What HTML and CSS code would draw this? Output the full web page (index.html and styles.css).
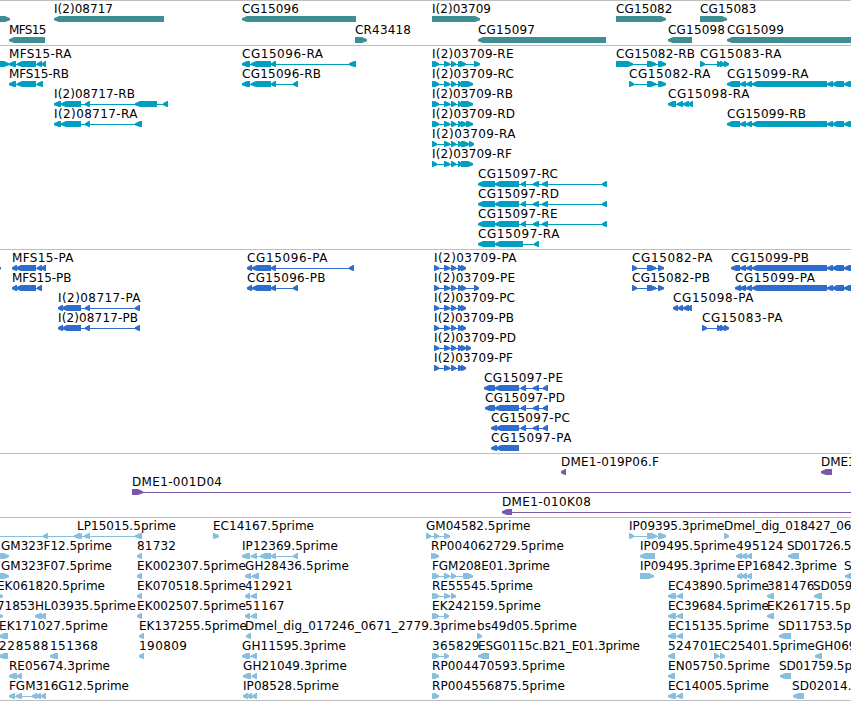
FILE: index.html
```html
<!DOCTYPE html>
<html lang="en">
<head>
  <meta charset="UTF-8" />
  <meta name="viewport" content="width=device-width, initial-scale=1.0"/>
  <title>Genome Browser</title>
  <link rel="stylesheet" href="styles.css">
</head>
<body>
  <main class="browser">
    <section class="track genes"><svg id="genes"></svg></section>
    <section class="track transcripts"><svg id="transcripts"></svg></section>
    <section class="track proteins"><svg id="proteins"></svg></section>
    <section class="track clones"><svg id="clones"></svg></section>
    <section class="track ests"><svg id="ests"></svg></section>
  </main>

  <script src="tracks.js"></script>
</body>
</html>
```
FILE: styles.css
```css
:root {
  --line-color: #bebebe;
  --gene-color: #3f8e93;
  --transcript-color: #009fc0;
  --protein-color: #2f6dcd;
  --clone-color: #7858a9;
  --est-color: #88bfdf;
}

body {
  margin: 0;
  background: #fff;
  overflow: hidden;
}

.browser {
  display: flex;
  flex-direction: column;
  border-bottom: 1px solid var(--line-color);
}

.track {
  box-sizing: border-box;
  border-top: 1px solid var(--line-color);
}

.track svg {
  display: block;
  width: 100%;
  height: 100%;
  overflow: hidden;
}

.track rect {
  shape-rendering: crispEdges;
}

.track text {
  font-family: "DejaVu Sans", sans-serif;
  font-size: 12px;
  fill: #000;
}

.genes { height: 45px; fill: var(--gene-color); }
.transcripts { height: 204px; fill: var(--transcript-color); }
.proteins { height: 204px; fill: var(--protein-color); }
.clones { height: 64px; fill: var(--clone-color); }
.ests { height: 183px; fill: var(--est-color); }
```
FILE: tracks.js
```js
// feature: [row, label, label end, strand, "start,end start,end ...", label start]
const cg99 = "740,746 746,752 752,827 827,833 832,844 844,856";
const pair = "432,437 434,439";

const genes = [
  [0, "", 0, "+", "-20,10"],
  [0, "I(2)08717", 112.5, "-", "54,164"],
  [1, "MFS15", 46, "-", "9,45"],
  [0, "CG15096", 298.5, "-", "242,356"],
  [1, "CR43418", 410.5, "+", "355,367"],
  [0, "I(2)03709", 490.5, "+", "432,480"],
  [1, "CG15097", 534.5, "-", "478,606"],
  [0, "CG15082", 672, "+", "616,666"],
  [1, "CG15098", 724.5, "-", "668,692"],
  [0, "CG15083", 756, "+", "700,727"],
  [1, "CG15099", 783.5, "-", "727,870"]
];

const transcripts = [
  [0, "", 0, "+", "-20,9"],
  [0, "MFS15-RA", 71, "-", "9,16 17,36 37,42 42,46"],
  [1, "MFS15-RB", 68.5, "-", "9,16 17,36 37,43"],
  [2, "I(2)08717-RB", 134.5, "-", "54,61 61,81 85,90 135,157 163,168"],
  [3, "I(2)08717-RA", 137, "-", "54,61 61,81 85,90 135,142"],
  [0, "CG15096-RA", 322.5, "-", "242,250 251,271 271,276 349,356"],
  [1, "CG15096-RB", 320.5, "-", "242,250 251,271 271,276 293,298"],
  [0, "I(2)03709-RE", 513, "+", pair + " 444,450 451,456 458,463 460,466 474,480"],
  [1, "I(2)03709-RC", 513.5, "+", pair + " 444,450 451,456 458,462 461,473"],
  [2, "I(2)03709-RB", 512.5, "+", pair + " 444,450 451,456 458,462 461,473"],
  [3, "I(2)03709-RD", 514.5, "+", pair + " 444,450 451,456 458,463 461,467 466,473"],
  [4, "I(2)03709-RA", 515, "+", "432,437 444,450 451,456 458,462 461,469 469,474"],
  [5, "I(2)03709-RF", 511.5, "+", "432,437 444,450 451,456 458,462 461,473"],
  [6, "CG15097-RC", 557.5, "-", "478,495 495,519 521,526 533,539 542,548 602,607"],
  [7, "CG15097-RD", 558.5, "-", "478,495 495,519 521,526 533,539 542,548 602,607"],
  [8, "CG15097-RE", 557, "-", "478,495 495,519 521,526 533,539 542,548 602,607"],
  [9, "CG15097-RA", 559, "-", "478,495 495,523 534,539"],
  [0, "CG15082-RB", 694.5, "+", "616,633 647,656 658,666"],
  [0, "CG15083-RA", 781, "+", "700,705 717,722 720,725 724,729"],
  [1, "CG15082-RA", 710, "+", "629,634 647,656 658,666"],
  [1, "CG15099-RA", 808, "-", "727,740 " + cg99],
  [2, "CG15098-RA", 749, "-", "668,676 677,683 683,689 688,693"],
  [3, "CG15099-RB", 805.5, "-", "727,740 " + cg99]
];

const proteins = [
  [0, "", 0, "+", "-20,-12 -8,1"],
  [0, "MFS15-PA", 73, "-", "12,17 16,36 37,42 41,46"],
  [1, "MFS15-PB", 71, "-", "12,17 16,36 37,42"],
  [2, "I(2)08717-PA", 140, "-", "58,63 62,81 85,90 135,140"],
  [3, "I(2)08717-PB", 137.5, "-", "58,63 62,81 85,90 135,140"],
  [0, "CG15096-PA", 327, "-", "247,252 252,271 271,276 349,354"],
  [1, "CG15096-PB", 325, "-", "247,252 252,271 271,276 293,298"],
  [0, "I(2)03709-PA", 516, "+", "434,439 444,450 451,456 458,463 461,466"],
  [1, "I(2)03709-PE", 514.5, "+", "434,439 444,450 451,456 458,463 461,466 474,479"],
  [2, "I(2)03709-PC", 514.5, "+", "434,439 444,450 451,456 458,463 461,466"],
  [3, "I(2)03709-PB", 513.5, "+", "434,439 444,450 451,456 458,463 461,466"],
  [4, "I(2)03709-PD", 515.5, "+", "434,439 444,450 451,456 458,463 461,466 466,471"],
  [5, "I(2)03709-PF", 512.5, "+", "434,439 444,450 451,456 458,463 461,466"],
  [6, "CG15097-PE", 562.5, "-", "484,495 495,519 521,526 533,539 543,548"],
  [7, "CG15097-PD", 564.5, "-", "485,495 495,519 521,526 533,539 543,548"],
  [8, "CG15097-PC", 569.5, "-", "491,497 496,519 521,526 533,539 543,548"],
  [9, "CG15097-PA", 571, "-", "491,497 496,519"],
  [0, "CG15082-PA", 712, "+", "632,637 647,656 658,664"],
  [1, "CG15082-PB", 709.5, "+", "632,637 647,656 658,664"],
  [0, "CG15099-PB", 808.5, "-", "731,740 " + cg99],
  [1, "CG15099-PA", 814.5, "-", "735,741 " + cg99],
  [2, "CG15098-PA", 753, "-", "673,678 678,683 683,689 687,692"],
  [3, "CG15083-PA", 782, "+", "702,707 717,722 720,725 724,729"]
];

const clones = [
  [0, "DME1-019P06.F", 658.5, "-", "561,566"],
  [0, "DME1", 855, "-", "821,832"],
  [1, "DME1-001D04", 221.5, "+", "132,143 870,880"],
  [2, "DME1-010K08", 590.5, "-", "502,512 870,880"]
];

const ests = [
  [0, "", 0, "-", "-10,-5 43,48 74,80"],
  [0, "LP15015.5prime", 175.5, "-", "77,82 84,90 135,142"],
  [0, "EC14167.5prime", 313.5, "+", "213,219"],
  [0, "GM04582.5prime", 530, "+", "426,431 434,439 444,450"],
  [0, "IP09395.3prime", 724, "+", "629,634 647,657 658,666"],
  [0, "Dmel_dig_018427_06", 851, "+", "724,729"],
  [1, "GM323F12.5prime", 111.5, "+", "-8,9", 1],
  [1, "81732", 175.5, "-", "137,142"],
  [1, "IP12369.5prime", 337.5, "-", "242,250 251,257 260,271 271,276 293,298"],
  [1, "RP004062729.5prime", 563.5, "+", "431,436 433,439"],
  [1, "IP09495.5prime", 735.5, "-", "640,655"],
  [1, "495124", 783, "-", "736,742 741,747 747,752"],
  [1, "SD01726.5", 851, "-", "788,799", 787],
  [2, "GM323F07.5prime", 111.5, "+", "-8,9", 1],
  [2, "EK002307.5prime", 245.5, "-", "137,142"],
  [2, "GH28436.5prime", 348.5, "-", "245,251 252,259"],
  [2, "FGM208E01.3prime", 549.5, "+", pair + " 444,450 451,456 463,473"],
  [2, "IP09495.3prime", 735, "+", "640,654"],
  [2, "EP16842.3prime", 836.5, "-", "737,742 741,747 747,752"],
  [2, "S", 851.5, "-", "845,856", 844],
  [3, "EK061820.5prime", 104.5, "+", "-4,3", -3],
  [3, "EK070518.5prime", 245.5, "-", "137,142"],
  [3, "412921", 292.5, "-", "245,250 251,257"],
  [3, "RE55545.5prime", 532.5, "+", pair + " 444,450 451,456"],
  [3, "EC43890.5prime", 768.5, "-", "668,676 677,683"],
  [3, "381476", 814, "-", "767,774"],
  [3, "SD059", 852, "-", "814,822", 813],
  [4, "71853", 34.5, "+", "-4,3", -3],
  [4, "HL03935.5prime", 135.5, "-", "35,42 40,46"],
  [4, "EK002507.5prime", 245.5, "-", "137,142"],
  [4, "51167", 284, "-", "245,250 251,257"],
  [4, "EK242159.5prime", 540.5, "+", pair + " 444,449"],
  [4, "EC39684.5prime", 768.5, "-", "668,676 677,683"],
  [4, "EK261715.5p", 850, "-", "767,774"],
  [5, "EK171027.5prime", 107.5, "-", "-1,8"],
  [5, "EK137255.5prime", 246.5, "-", "139,144"],
  [5, "Dmel_dig_017246_0671_2779.3prime", 475.5, "-", "246,251", 245],
  [5, "bs49d05.5prime", 576.5, "+", "477,482"],
  [5, "EC15135.5prime", 768.5, "-", "668,676 677,683"],
  [5, "SD11753.5p", 851, "-", "779,791", 778],
  [6, "228588", 48, "-", "-1,8"],
  [6, "151368", 97.5, "-", "50,58"],
  [6, "190809", 186.5, "-", "139,144"],
  [6, "GH11595.3prime", 345.5, "-", "242,250 251,257"],
  [6, "365829", 479, "+", pair + " 444,449"],
  [6, "ESG0115c.B21_E01.3prime", 639.5, "-", "478,489"],
  [6, "524701", 715, "-", "668,675"],
  [6, "EC25401.5prime", 814.5, "+", "714,719 720,725"],
  [6, "GH069", 856, "-", "815,822"],
  [7, "RE05674.3prime", 109.5, "-", "9,17 17,22"],
  [7, "GH21049.3prime", 346.5, "-", "243,251 252,257"],
  [7, "RP004470593.5prime", 564.5, "+", pair],
  [7, "EN05750.5prime", 769.5, "-", "668,675"],
  [7, "SD01759.5p", 851.5, "-", "780,791", 779],
  [8, "FGM316G12.5prime", 128.5, "-", "9,15 16,22 32,37 36,41 41,46"],
  [8, "IP08528.5prime", 338.5, "-", "243,248 247,252 252,257"],
  [8, "RP004556875.5prime", 564.5, "+", pair],
  [8, "EC14005.5prime", 768.5, "-", "668,676 677,683"],
  [8, "SD02014.", 851, "-", "793,804", 792]
];

function add(svg, name, attrs) {
  const el = document.createElementNS("http://www.w3.org/2000/svg", name);
  for (const key in attrs) el.setAttribute(key, attrs[key]);
  svg.appendChild(el);
  return el;
}

// exon block with a blunt arrow head on the strand side
function exonPoints(x1, x2, y, strand) {
  const head = Math.min(5, x2 - x1 - 1);
  if (strand === "-") {
    return `${x1},${y + 2.3} ${x1 + head},${y} ${x2},${y} ${x2},${y + 6} ${x1 + head},${y + 6} ${x1},${y + 4.3}`;
  }
  return `${x2},${y + 2.3} ${x2 - head},${y} ${x1},${y} ${x1},${y + 6} ${x2 - head},${y + 6} ${x2},${y + 4.3}`;
}

function drawTrack(id, features, rowHeight) {
  const svg = document.getElementById(id);
  for (const [row, label, labelEnd, strand, blocks, labelStart] of features) {
    const y = row * rowHeight + 15;
    const exons = blocks.split(" ").map(b => b.split(",").map(Number));
    const start = exons[0][0];
    const end = exons[exons.length - 1][1];

    if (exons.length > 1) add(svg, "rect", { x: start, y: y + 3, width: end - start, height: 1 });
    for (const [x1, x2] of exons) {
      add(svg, "polygon", { points: exonPoints(x1, x2, y, strand) });
    }

    if (label) {
      const x = labelStart === undefined ? start : labelStart;
      const text = add(svg, "text", { x: x, y: y - 3, textLength: labelEnd - x + 0.5 });
      text.textContent = label;
    }
  }
}

drawTrack("genes", genes, 21);
drawTrack("transcripts", transcripts, 20);
drawTrack("proteins", proteins, 20);
drawTrack("clones", clones, 20);
drawTrack("ests", ests, 20);
```
